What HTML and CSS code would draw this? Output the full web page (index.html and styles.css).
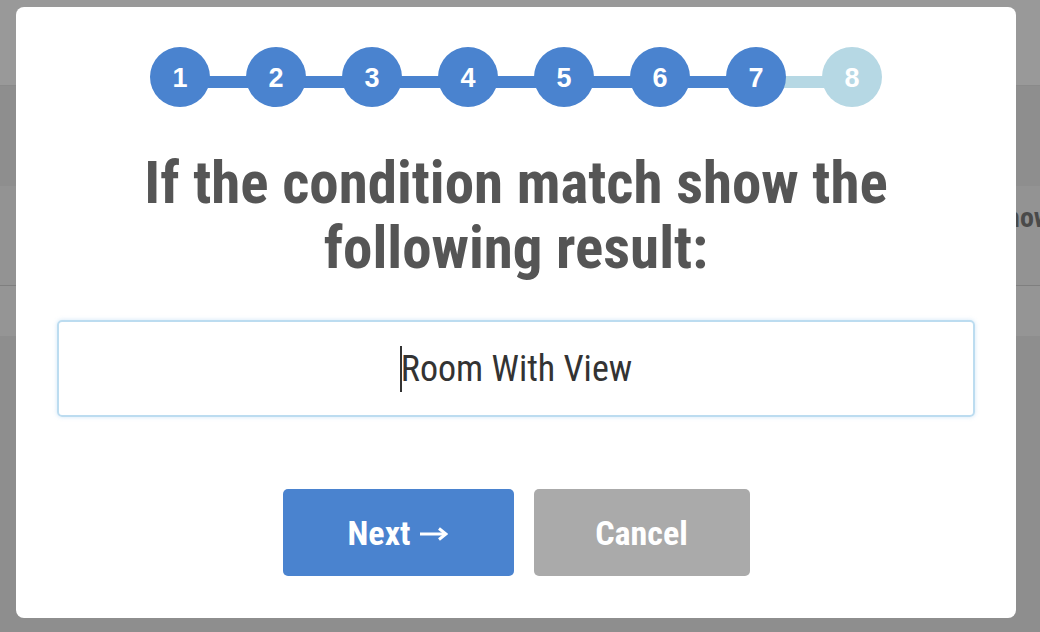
FILE: index.html
```html
<!DOCTYPE html>
<html lang="en">
<head>
<meta charset="utf-8">
<title>Condition wizard</title>
<link rel="stylesheet" href="styles.css">
</head>
<body>
<div class="page">
  <div class="page-header"></div>
  <div class="row row-a"></div>
  <div class="row row-b"><span class="row-spacer"></span><span class="row-label">Show</span></div>
  <div class="row row-c"></div>
  <div class="row row-d"></div>
</div>
<div class="overlay"></div>
<div class="modal">
  <ol class="steps">
    <li class="step done">1</li>
    <li class="bar done"></li>
    <li class="step done">2</li>
    <li class="bar done"></li>
    <li class="step done">3</li>
    <li class="bar done"></li>
    <li class="step done">4</li>
    <li class="bar done"></li>
    <li class="step done">5</li>
    <li class="bar done"></li>
    <li class="step done">6</li>
    <li class="bar done"></li>
    <li class="step done">7</li>
    <li class="bar todo"></li>
    <li class="step todo">8</li>
  </ol>
  <h1 class="title">If the condition match show the following result:</h1>
  <div class="field"><span class="caret"></span>Room With View</div>
  <div class="actions">
    <button class="btn btn-next">Next<svg class="arrow" width="28" height="14" viewBox="0 0 28 14" aria-hidden="true"><path d="M0 7H25" stroke="#ffffff" stroke-width="3"/><path d="M19 1.5L26 7L19 12.5" fill="none" stroke="#ffffff" stroke-width="3"/></svg></button>
    <button class="btn btn-cancel">Cancel</button>
  </div>
</div>
</body>
</html>
```

FILE: styles.css
```css
* { box-sizing: border-box; }
html, body { margin: 0; padding: 0; }
body {
  width: 1040px;
  height: 632px;
  overflow: hidden;
  background: #ededed;
  font-family: "Roboto Condensed", Roboto, "Liberation Sans", sans-serif;
  font-stretch: condensed;
}
.page { width: 1040px; }
.page-header { height: 86px; background: #ffffff; border-bottom: 1px solid #e6e6e6; }
.row-a { height: 100px; background: #ededed; }
.row-b {
  height: 100px;
  background: #f5f5f5;
  border-bottom: 1px solid #d4d4d4;
  display: flex;
  align-items: flex-start;
  padding-top: 15px;
  white-space: nowrap;
  overflow: hidden;
}
.row-spacer { flex: 0 0 991px; }
.row-label { font-size: 28px; line-height: 33px; font-weight: 700; color: #7c7c7c; }
.row-c { height: 50px; background: #f8f8f8; }
.row-d { height: 300px; background: #ededed; }
.overlay { position: fixed; inset: 0; background: rgba(0, 0, 0, 0.4); }
.modal {
  position: absolute;
  left: 16px;
  top: 7px;
  width: 1000px;
  height: 611px;
  background: #ffffff;
  border-radius: 8px;
  padding: 40px 41px 42px;
  display: flex;
  flex-direction: column;
  align-items: center;
}
.steps {
  list-style: none;
  margin: 0;
  padding: 0;
  display: flex;
  align-items: flex-start;
}
.step {
  width: 60px;
  height: 60px;
  border-radius: 50%;
  background: #4a83cf;
  color: #ffffff;
  font-family: "Liberation Sans", Arial, sans-serif;
  font-stretch: normal;
  font-weight: 700;
  font-size: 27px;
  padding-top: 2px;
  display: flex;
  align-items: center;
  justify-content: center;
  position: relative;
  z-index: 1;
}
.step.todo { background: #b6d8e4; }
.bar {
  width: 40px;
  height: 12px;
  margin: 29px -2px 0;
  background: #4a83cf;
}
.bar.todo { background: #b6d8e4; }
.title {
  margin: 43px 0 0;
  font-size: 59px;
  line-height: 65px;
  font-weight: 700;
  color: #555555;
  text-align: center;
  width: 760px;
}
.field {
  margin-top: 40px;
  width: 918px;
  height: 97px;
  border: 2px solid #bcdcf0;
  border-radius: 5px;
  box-shadow: 0 0 4px rgba(120, 180, 230, 0.35);
  display: flex;
  align-items: center;
  justify-content: center;
  font-size: 36px;
  color: #333333;
}
.caret { display: inline-block; width: 2px; height: 46px; background: #333333; margin-right: -1px; }
.actions {
  margin-top: 72px;
  display: flex;
  gap: 20px;
}
.btn {
  height: 87px;
  border: 0;
  border-radius: 5px;
  color: #ffffff;
  font-family: "Roboto Condensed", Roboto, "Liberation Sans", sans-serif;
  font-stretch: condensed;
  font-weight: 700;
  font-size: 34px;
  padding: 0;
  display: flex;
  align-items: center;
  justify-content: center;
}
.arrow { margin-left: 10px; margin-top: 2px; }
.btn-next { width: 231px; background: #4a83cf; }
.btn-cancel { width: 216px; background: #aaaaaa; }
```
